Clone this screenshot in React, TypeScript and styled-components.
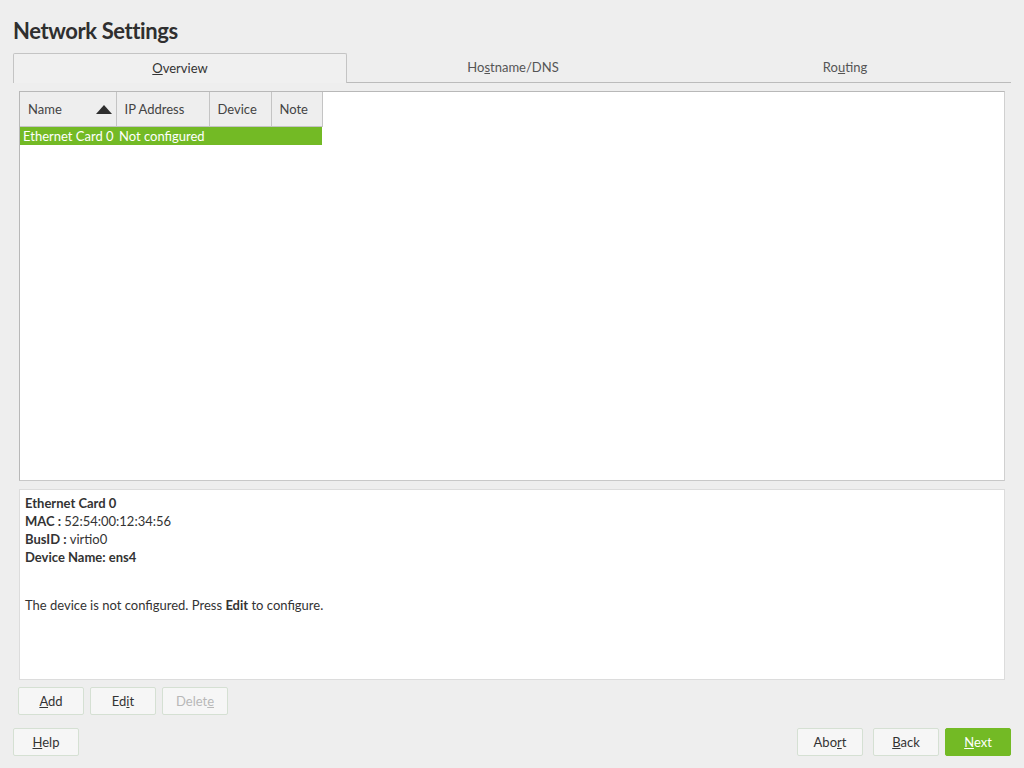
import React from "react";
import styled, { createGlobalStyle } from "styled-components";

const GlobalStyle = createGlobalStyle`
  html, body {
    margin: 0;
    padding: 0;
    background: #eeeeee;
  }
  body {
    font-family: "Lato", "Open Sans", sans-serif;
    font-size: 13px;
    color: #333333;
  }
`;

interface IColumn {
  title: string;
  width: number;
  sorted?: boolean;
}

const columns: IColumn[] = [
  { title: "Name", width: 96, sorted: true },
  { title: "IP Address", width: 93 },
  { title: "Device", width: 62 },
  { title: "Note", width: 51 },
];

// text with one mnemonic letter underlined, as YaST draws its shortcuts
const Mnemonic: React.FC<{ text: string; at: number }> = ({ text, at }) => (
  <>
    {text.slice(0, at)}
    <u>{text[at]}</u>
    {text.slice(at + 1)}
  </>
);

const App: React.FC = () => {
  return (
    <>
      <GlobalStyle />
      <Page>
        <Title>Network Settings</Title>
        <Tabs>
          <Tab active>
            <Mnemonic text="Overview" at={0} />
          </Tab>
          <Tab>
            <Mnemonic text="Hostname/DNS" at={2} />
          </Tab>
          <Tab>
            <Mnemonic text="Routing" at={2} />
          </Tab>
        </Tabs>
        <Content>
          <TableFrame>
            <Table>
              <thead>
                <tr>
                  {columns.map((c) => (
                    <HeadCell key={c.title} style={{ width: c.width }}>
                      <HeadInner>
                        {c.title}
                        {c.sorted && <SortArrow />}
                      </HeadInner>
                    </HeadCell>
                  ))}
                </tr>
              </thead>
              <tbody>
                <SelectedRow>
                  <Cell>Ethernet Card 0</Cell>
                  <Cell>Not configured</Cell>
                  <Cell></Cell>
                  <Cell></Cell>
                </SelectedRow>
              </tbody>
            </Table>
          </TableFrame>
          <Details>
            <Line>
              <b>Ethernet Card 0</b>
            </Line>
            <Line>
              <b>MAC : </b>52:54:00:12:34:56
            </Line>
            <Line>
              <b>BusID : </b>virtio0
            </Line>
            <Line>
              <b>Device Name: ens4</b>
            </Line>
            <Paragraph>
              The device is not configured. Press <b>Edit</b> to configure.
            </Paragraph>
          </Details>
          <ActionRow>
            <Button>
              <Mnemonic text="Add" at={0} />
            </Button>
            <Button>
              <Mnemonic text="Edit" at={2} />
            </Button>
            <Button disabled>
              <Mnemonic text="Delete" at={5} />
            </Button>
          </ActionRow>
        </Content>
        <Footer>
          <Button>
            <Mnemonic text="Help" at={0} />
          </Button>
          <FooterRight>
            <Button>
              <Mnemonic text="Abort" at={3} />
            </Button>
            <Button>
              <Mnemonic text="Back" at={0} />
            </Button>
            <Button primary>
              <Mnemonic text="Next" at={0} />
            </Button>
          </FooterRight>
        </Footer>
      </Page>
    </>
  );
};
export default App;

const Page = styled.div`
  display: flex;
  flex-direction: column;
  width: 1024px;
  height: 768px;
  box-sizing: border-box;
  padding: 13px 13px 0 13px;
`;

const Title = styled.h1`
  margin: 0;
  height: 40px;
  font-family: "Lato", sans-serif;
  font-size: 22px;
  font-weight: 700;
  line-height: 36px;
  color: #2f2f2f;
  letter-spacing: -0.4px;
`;

const Tabs = styled.div`
  display: flex;
  height: 30px;
`;

const Tab = styled.div<{ active?: boolean }>`
  flex: 1;
  display: flex;
  align-items: center;
  justify-content: center;
  box-sizing: border-box;
  padding-bottom: 2px;
  color: ${({ active }) => (active ? "#333333" : "#555555")};
  border-bottom: 1px solid #bbbbbb;
  ${({ active }) =>
    active &&
    `
    border: 1px solid #c4c4c4;
    border-bottom: none;
    border-radius: 2px 2px 0 0;
    background: #f0f0f0;
  `}
`;

const Content = styled.div`
  display: flex;
  flex-direction: column;
  padding: 8px 6px 0 6px;
`;

const TableFrame = styled.div`
  height: 390px;
  box-sizing: border-box;
  background: #ffffff;
  border: 1px solid #b8b8b8;
  border-right-color: #d0d0d0;
  border-bottom-color: #c8c8c8;
`;

const Table = styled.table`
  border-collapse: collapse;
  table-layout: fixed;
`;

const HeadCell = styled.th`
  box-sizing: border-box;
  height: 34px;
  padding: 0 0 0 8px;
  background: #eeeeee;
  border-right: 1px solid #c4c4c4;
  border-bottom: 1px solid #c4c4c4;
  font-weight: 400;
  text-align: left;
  color: #444444;
`;

const HeadInner = styled.div`
  display: flex;
  align-items: center;
  justify-content: space-between;
  padding-right: 4px;
`;

const SortArrow = styled.span`
  width: 0;
  height: 0;
  border-left: 8px solid transparent;
  border-right: 8px solid transparent;
  border-bottom: 9px solid #2e2e2e;
  margin-top: 2px;
`;

const SelectedRow = styled.tr`
  background: #73ba25;
  color: #ffffff;
`;

const Cell = styled.td`
  height: 18px;
  padding: 0 0 0 3px;
  white-space: nowrap;
  line-height: 18px;
`;

const Details = styled.div`
  margin-top: 8px;
  height: 191px;
  box-sizing: border-box;
  padding: 4px 5px;
  background: #ffffff;
  border: 1px solid #dcdcdc;
  color: #333333;
`;

const Line = styled.div`
  line-height: 18px;
  b {
    font-weight: 700;
  }
`;

const Paragraph = styled.p`
  margin: 30px 0 0 0;
  line-height: 18px;
`;

const ActionRow = styled.div`
  display: flex;
  gap: 6px;
  margin-top: 7px;
  margin-left: -1px;
`;

const Footer = styled.div`
  display: flex;
  justify-content: space-between;
  margin-top: 13px;
`;

const FooterRight = styled.div`
  display: flex;
  gap: 10px;
  & > :last-child {
    margin-left: -4px;
  }
`;

const Button = styled.button<{ primary?: boolean }>`
  width: 66px;
  height: 28px;
  box-sizing: border-box;
  padding: 0;
  font-family: "Lato", sans-serif;
  font-size: 13px;
  border-radius: 2px;
  border: 1px solid ${({ primary }) => (primary ? "#73ba25" : "#d5e0d3")};
  background: ${({ primary }) => (primary ? "#73ba25" : "#f6f6f6")};
  color: ${({ primary }) => (primary ? "#ffffff" : "#333333")};
  &:disabled {
    color: #b8b8b8;
  }
`;
